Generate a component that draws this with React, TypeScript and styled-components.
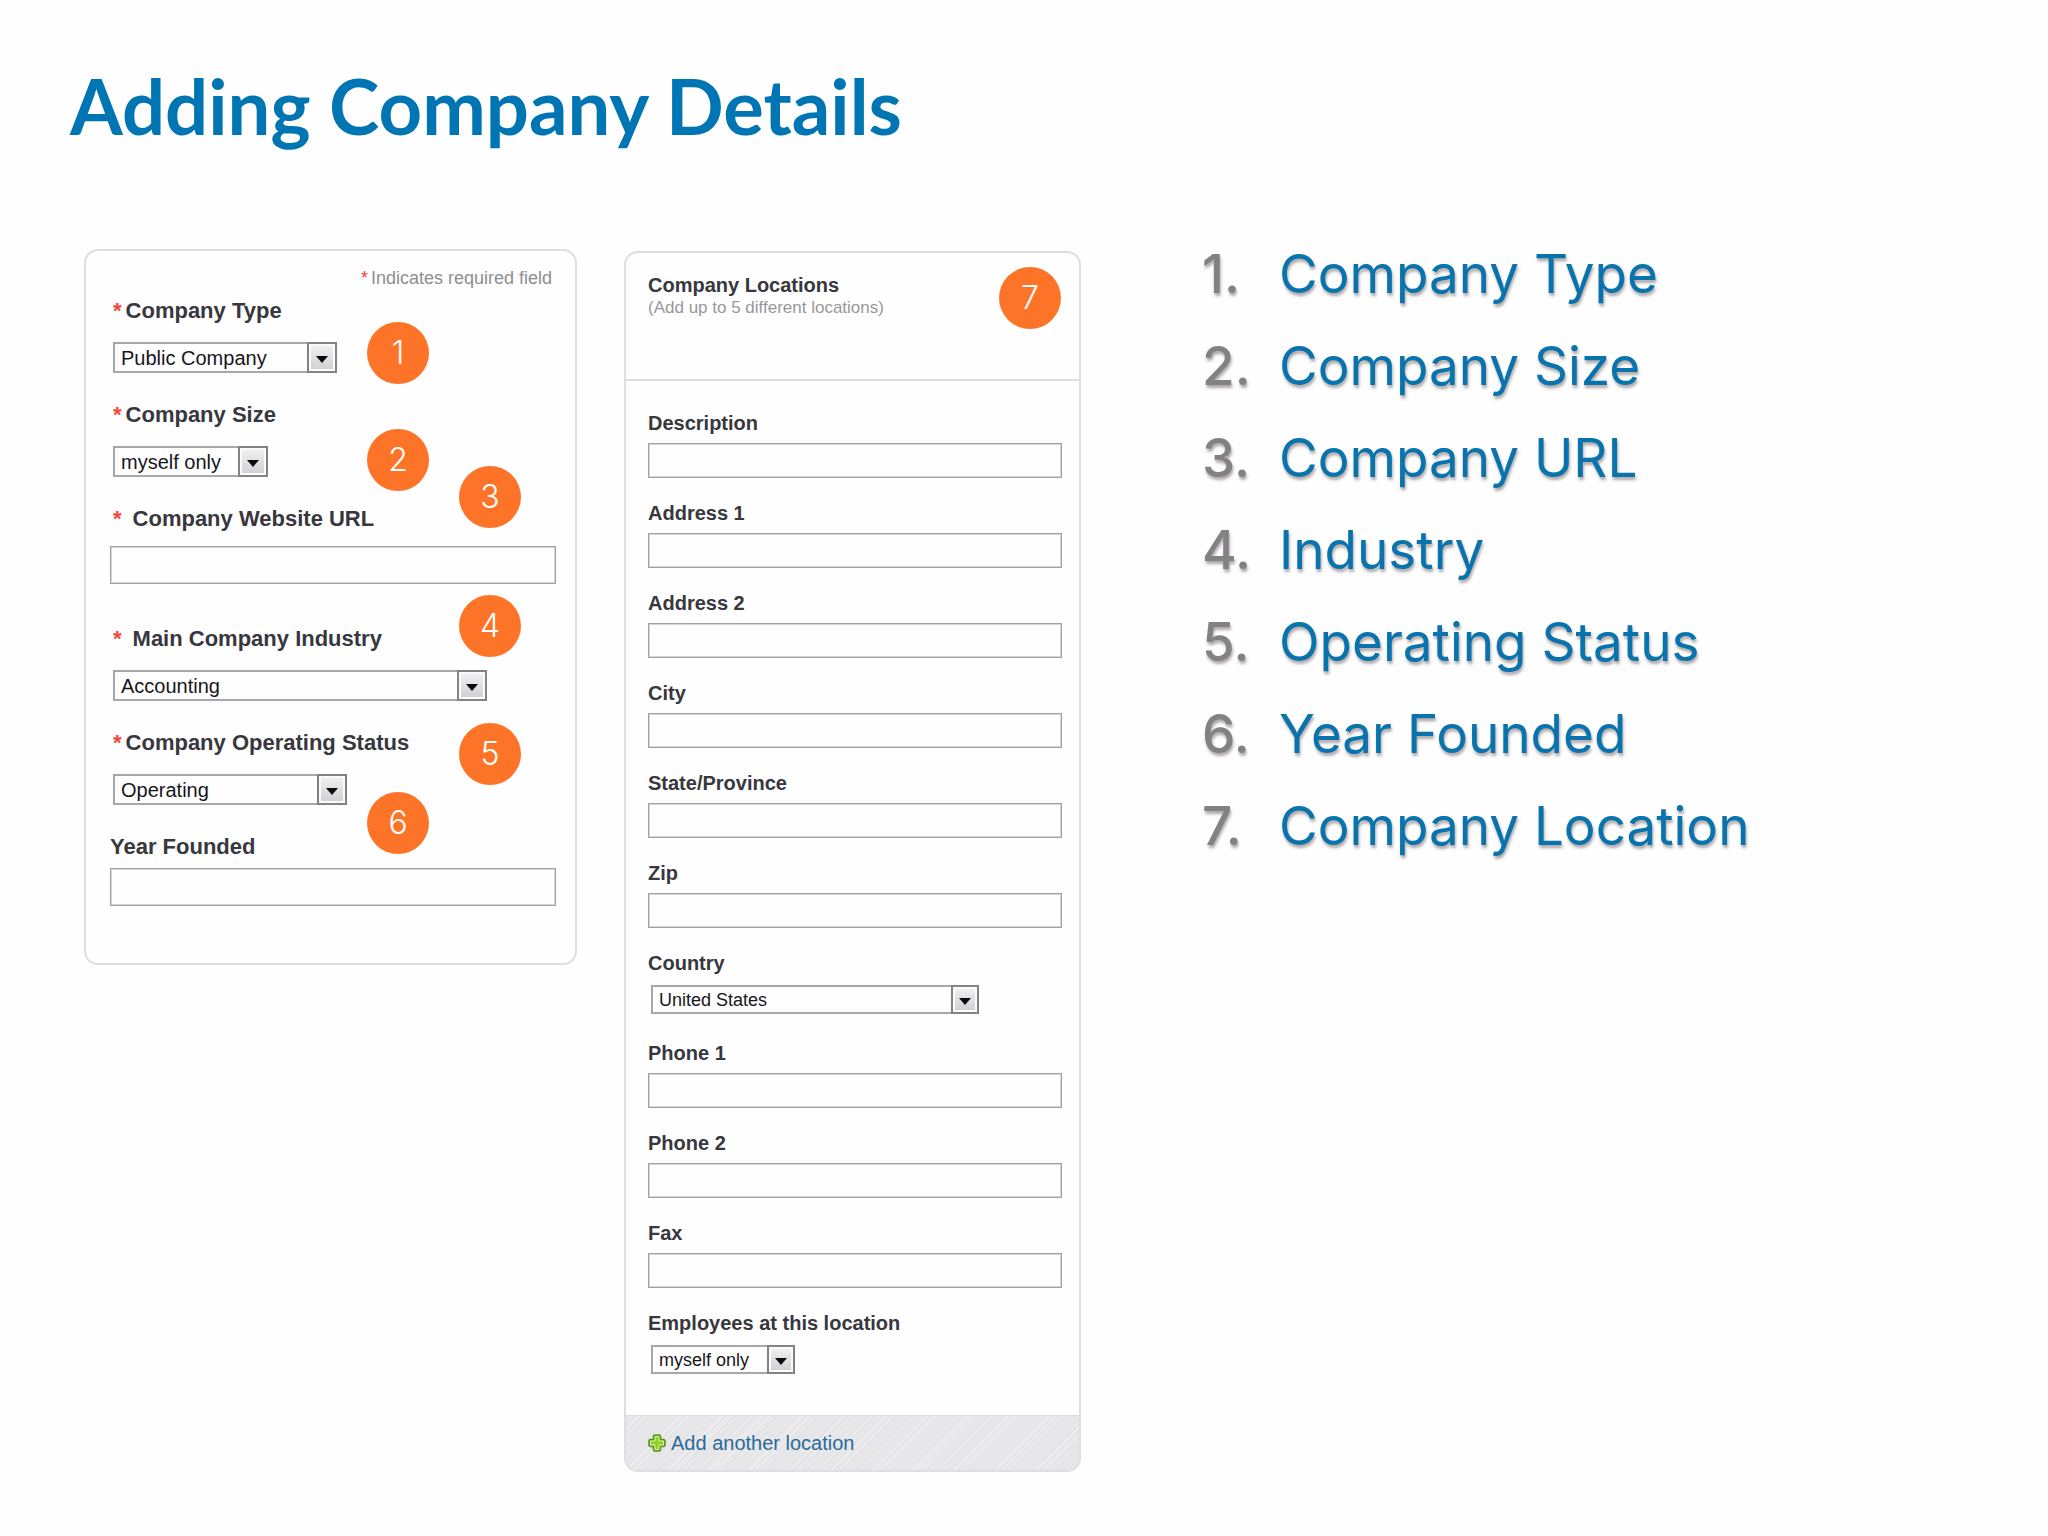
import React, { useId } from "react";
import styled, { createGlobalStyle, css } from "styled-components";

const sans = `Arial, "Liberation Sans", sans-serif`;
const display = `Inter, "Century Gothic", sans-serif`;

const GlobalStyle = createGlobalStyle`
  *, *::before, *::after { box-sizing: border-box; }
  body { margin: 0; background: #fefefe; font-family: ${sans}; }
  h1, h2, p, ol { margin: 0; padding: 0; }
`;

const Page = styled.main`
  padding: 62px 84px 62px;
`;

const Title = styled.h1`
  margin: 0 -14px 99px;
  color: #0075b4;
  font: 700 76px/88px Lato, "Century Gothic", sans-serif;
`;

const Columns = styled.div`
  display: grid;
  grid-template-columns: minmax(auto, 493px) minmax(auto, 457px) 1fr;
  align-items: start;
  column-gap: 47px;
`;

const Card = styled.section`
  position: relative;
  overflow: hidden;
  border: 2px solid #dedee0;
  border-radius: 14px;
`;

const DetailsForm = styled.form`
  display: flex;
  flex-direction: column;
  padding: 15px 19px 57px 24px;
`;

const RequiredNote = styled.p`
  margin-bottom: 9px;
  padding-right: 4px;
  color: #8e8e90;
  font-size: 18px;
  line-height: 24px;
  text-align: right;
`;

const Star = styled.span<{ $gap: number }>`
  margin-right: ${(p) => p.$gap}px;
  color: #f8403c;
`;

const DetailField = styled.div<{ $gap: number; $after: number; $indent?: boolean }>`
  display: flex;
  flex-direction: column;
  gap: ${(p) => p.$gap}px;
  margin-bottom: ${(p) => p.$after}px;

  label {
    padding-left: ${(p) => (p.$indent ? 3 : 0)}px;
    color: #37373d;
    font-size: 22px;
    font-weight: 700;
    line-height: 24px;
  }
`;

const TextInput = styled.input<{ $height: number }>`
  width: 100%;
  height: ${(p) => p.$height}px;
  padding: 0 8px;
  border: 1px solid #a2a2a6;
  border-radius: 0;
  box-shadow: inset 0 0 0 1px #d6d6d9;
  background: transparent;
  color: #111;
  font: 18px ${sans};
`;

const ArrowButton = styled.span`
  position: absolute;
  inset: 0 0 0 auto;
  display: grid;
  place-items: center;
  width: 28px;
  border: 2px solid #838387;
  background: linear-gradient(#f2f2f4, #cfcfd2);
  box-shadow: inset 0 0 0 2px #fbfbfc;
  pointer-events: none;

  svg {
    margin-top: 4px;
  }
`;

const SelectBox = styled.span<{ $width: number; $size: "large" | "small" }>`
  position: relative;
  display: block;
  width: ${(p) => p.$width}px;
  margin-left: 3px;

  select {
    display: block;
    width: 100%;
    padding: 0 32px 0 6px;
    appearance: none;
    border: 2px solid #a8a8ac;
    border-radius: 0;
    background: #fefefe;
    color: #16161c;
    ${(p) =>
      p.$size === "large"
        ? css`height: 31px; font: 20px ${sans};`
        : css`height: 29px; font: 18px ${sans};`}
  }

  ${ArrowButton} {
    width: ${(p) => (p.$size === "large" ? 30 : 28)}px;
  }
`;

const Badge = styled.span<{ $left?: number; $top?: number }>`
  display: grid;
  place-items: center;
  width: 62px;
  height: 62px;
  border-radius: 50%;
  background: #fd7428;
  color: #fff;
  font: 300 32px/1 ${display};
  ${(p) =>
    p.$top !== undefined &&
    css`position: absolute; left: ${p.$left}px; top: ${p.$top}px;`}
`;

const LocationsCard = styled(Card)`
  margin-top: 2px;
`;

const LocationsHeader = styled.header`
  display: flex;
  justify-content: space-between;
  min-height: 128px;
  padding: 14px 18px 14px 22px;
  border-bottom: 2px solid #dedee0;

  h2 {
    padding-top: 6px;
    color: #37373d;
    font-size: 20px;
    line-height: 24px;
  }

  p {
    color: #98989a;
    font-size: 17px;
    line-height: 22px;
  }
`;

const LocationFields = styled.div`
  display: flex;
  flex-direction: column;
  gap: 23px;
  padding: 30px 17px 37px 22px;
`;

const LocationField = styled.div`
  display: flex;
  flex-direction: column;
  gap: 7px;
  min-height: 67px;

  label {
    color: #37373d;
    font-size: 20px;
    font-weight: 700;
    line-height: 25px;
  }

  ${SelectBox} {
    margin-top: 2px;
  }
`;

const LocationsFooter = styled.footer`
  display: flex;
  align-items: center;
  height: 55px;
  padding: 0 22px;
  border-top: 1px solid #dcdcdf;
  background:
    repeating-linear-gradient(135deg, transparent 0 9px, #efeff1 9px 10px, transparent 10px 14px, #ededef 14px 15px, transparent 15px 29px),
    repeating-linear-gradient(135deg, #e5e4e7 0 3px, #e9e8eb 3px 5px);
`;

const AddLink = styled.a`
  display: flex;
  align-items: center;
  gap: 5px;
  color: #2b6a9b;
  font-size: 20px;
  line-height: 24px;
  text-decoration: none;
`;

const Legend = styled.ol`
  display: flex;
  flex-direction: column;
  gap: 44px;
  padding: 1px 0 0 74px;
  list-style: none;
  color: #0973ad;
  font: 400 53px/48px ${display};
  text-shadow: 1px 3px 3px rgba(60, 40, 40, 0.4);
  white-space: nowrap;
`;

const LegendItem = styled.li`
  display: flex;
`;

const LegendNumber = styled.span`
  width: 77px;
  color: #828285;
  font-weight: 500;
`;

function Select({ id, value, width, size }: { id: string; value: string; width: number; size: "large" | "small" }) {
  return (
    <SelectBox $width={width} $size={size}>
      <select id={id} defaultValue={value}>
        <option>{value}</option>
      </select>
      <ArrowButton aria-hidden="true">
        <svg width="12" height="7" viewBox="0 0 12 7">
          <path d="M0 0h12L6 7z" fill="#0b0b0d" />
        </svg>
      </ArrowButton>
    </SelectBox>
  );
}

type DetailItem = { label: string; star?: number; value?: string; width?: number; gap: number; after: number };

const details: DetailItem[] = [
  { label: "Company Type", star: 4, value: "Public Company", width: 224, gap: 19, after: 30 },
  { label: "Company Size", star: 4, value: "myself only", width: 155, gap: 19, after: 30 },
  { label: "Company Website URL", star: 11, gap: 15, after: 43 },
  { label: "Main Company Industry", star: 11, value: "Accounting", width: 374, gap: 19, after: 30 },
  { label: "Company Operating Status", star: 4, value: "Operating", width: 234, gap: 19, after: 30 },
  { label: "Year Founded", gap: 9, after: 0 },
];

function Detail({ item }: { item: DetailItem }) {
  const id = useId();
  return (
    <DetailField $gap={item.gap} $after={item.after} $indent={item.star !== undefined}>
      <label htmlFor={id}>
        {item.star !== undefined && <Star $gap={item.star}>*</Star>}
        {item.label}
      </label>
      {item.value ? (
        <Select id={id} value={item.value} width={item.width!} size="large" />
      ) : (
        <TextInput id={id} type="text" $height={38} />
      )}
    </DetailField>
  );
}

const badges = [
  { left: 281, top: 71 },
  { left: 281, top: 178 },
  { left: 373, top: 215 },
  { left: 373, top: 344 },
  { left: 373, top: 472 },
  { left: 281, top: 541 },
];

type PlaceItem = { label: string; value?: string; width?: number };

const places: PlaceItem[] = [
  { label: "Description" },
  { label: "Address 1" },
  { label: "Address 2" },
  { label: "City" },
  { label: "State/Province" },
  { label: "Zip" },
  { label: "Country", value: "United States", width: 328 },
  { label: "Phone 1" },
  { label: "Phone 2" },
  { label: "Fax" },
  { label: "Employees at this location", value: "myself only", width: 144 },
];

function Place({ item }: { item: PlaceItem }) {
  const id = useId();
  return (
    <LocationField>
      <label htmlFor={id}>{item.label}</label>
      {item.value ? (
        <Select id={id} value={item.value} width={item.width!} size="small" />
      ) : (
        <TextInput id={id} type="text" $height={35} />
      )}
    </LocationField>
  );
}

function PlusIcon() {
  return (
    <svg width="18" height="18" viewBox="0 0 18 18" aria-hidden="true">
      <path
        d="M6.500 1h5l1 1v3.500h3.500l1 1v5l-1 1h-3.500v3.500l-1 1h-5l-1-1v-3.500H2l-1-1v-5l1-1h3.500V2z"
        fill="#8fd02c"
        stroke="#5c8f2c"
        strokeWidth="1.600"
        strokeLinejoin="round"
      />
      <path
        d="M7 2.500h4v4.500h4.500v4H11v4.500H7V11H2.500V7H7z"
        fill="none"
        stroke="#d3f08f"
        strokeWidth="1"
      />
    </svg>
  );
}

const legend = [
  "Company Type",
  "Company Size",
  "Company URL",
  "Industry",
  "Operating Status",
  "Year Founded",
  "Company Location",
];

export default function App() {
  return (
    <>
      <GlobalStyle />
      <Page>
        <Title>Adding Company Details</Title>
        <Columns>
          <Card>
            <DetailsForm>
              <RequiredNote>
                <Star $gap={3}>*</Star>
                Indicates required field
              </RequiredNote>
              {details.map((item) => (
                <Detail key={item.label} item={item} />
              ))}
            </DetailsForm>
            {badges.map((b, i) => (
              <Badge key={i} $left={b.left} $top={b.top}>
                {i + 1}
              </Badge>
            ))}
          </Card>
          <LocationsCard>
            <LocationsHeader>
              <div>
                <h2>Company Locations</h2>
                <p>(Add up to 5 different locations)</p>
              </div>
              <Badge>7</Badge>
            </LocationsHeader>
            <LocationFields>
              {places.map((item) => (
                <Place key={item.label} item={item} />
              ))}
            </LocationFields>
            <LocationsFooter>
              <AddLink href="#">
                <PlusIcon />
                Add another location
              </AddLink>
            </LocationsFooter>
          </LocationsCard>
          <Legend>
            {legend.map((text, i) => (
              <LegendItem key={text}>
                <LegendNumber>{i + 1}.</LegendNumber>
                {text}
              </LegendItem>
            ))}
          </Legend>
        </Columns>
      </Page>
    </>
  );
}
